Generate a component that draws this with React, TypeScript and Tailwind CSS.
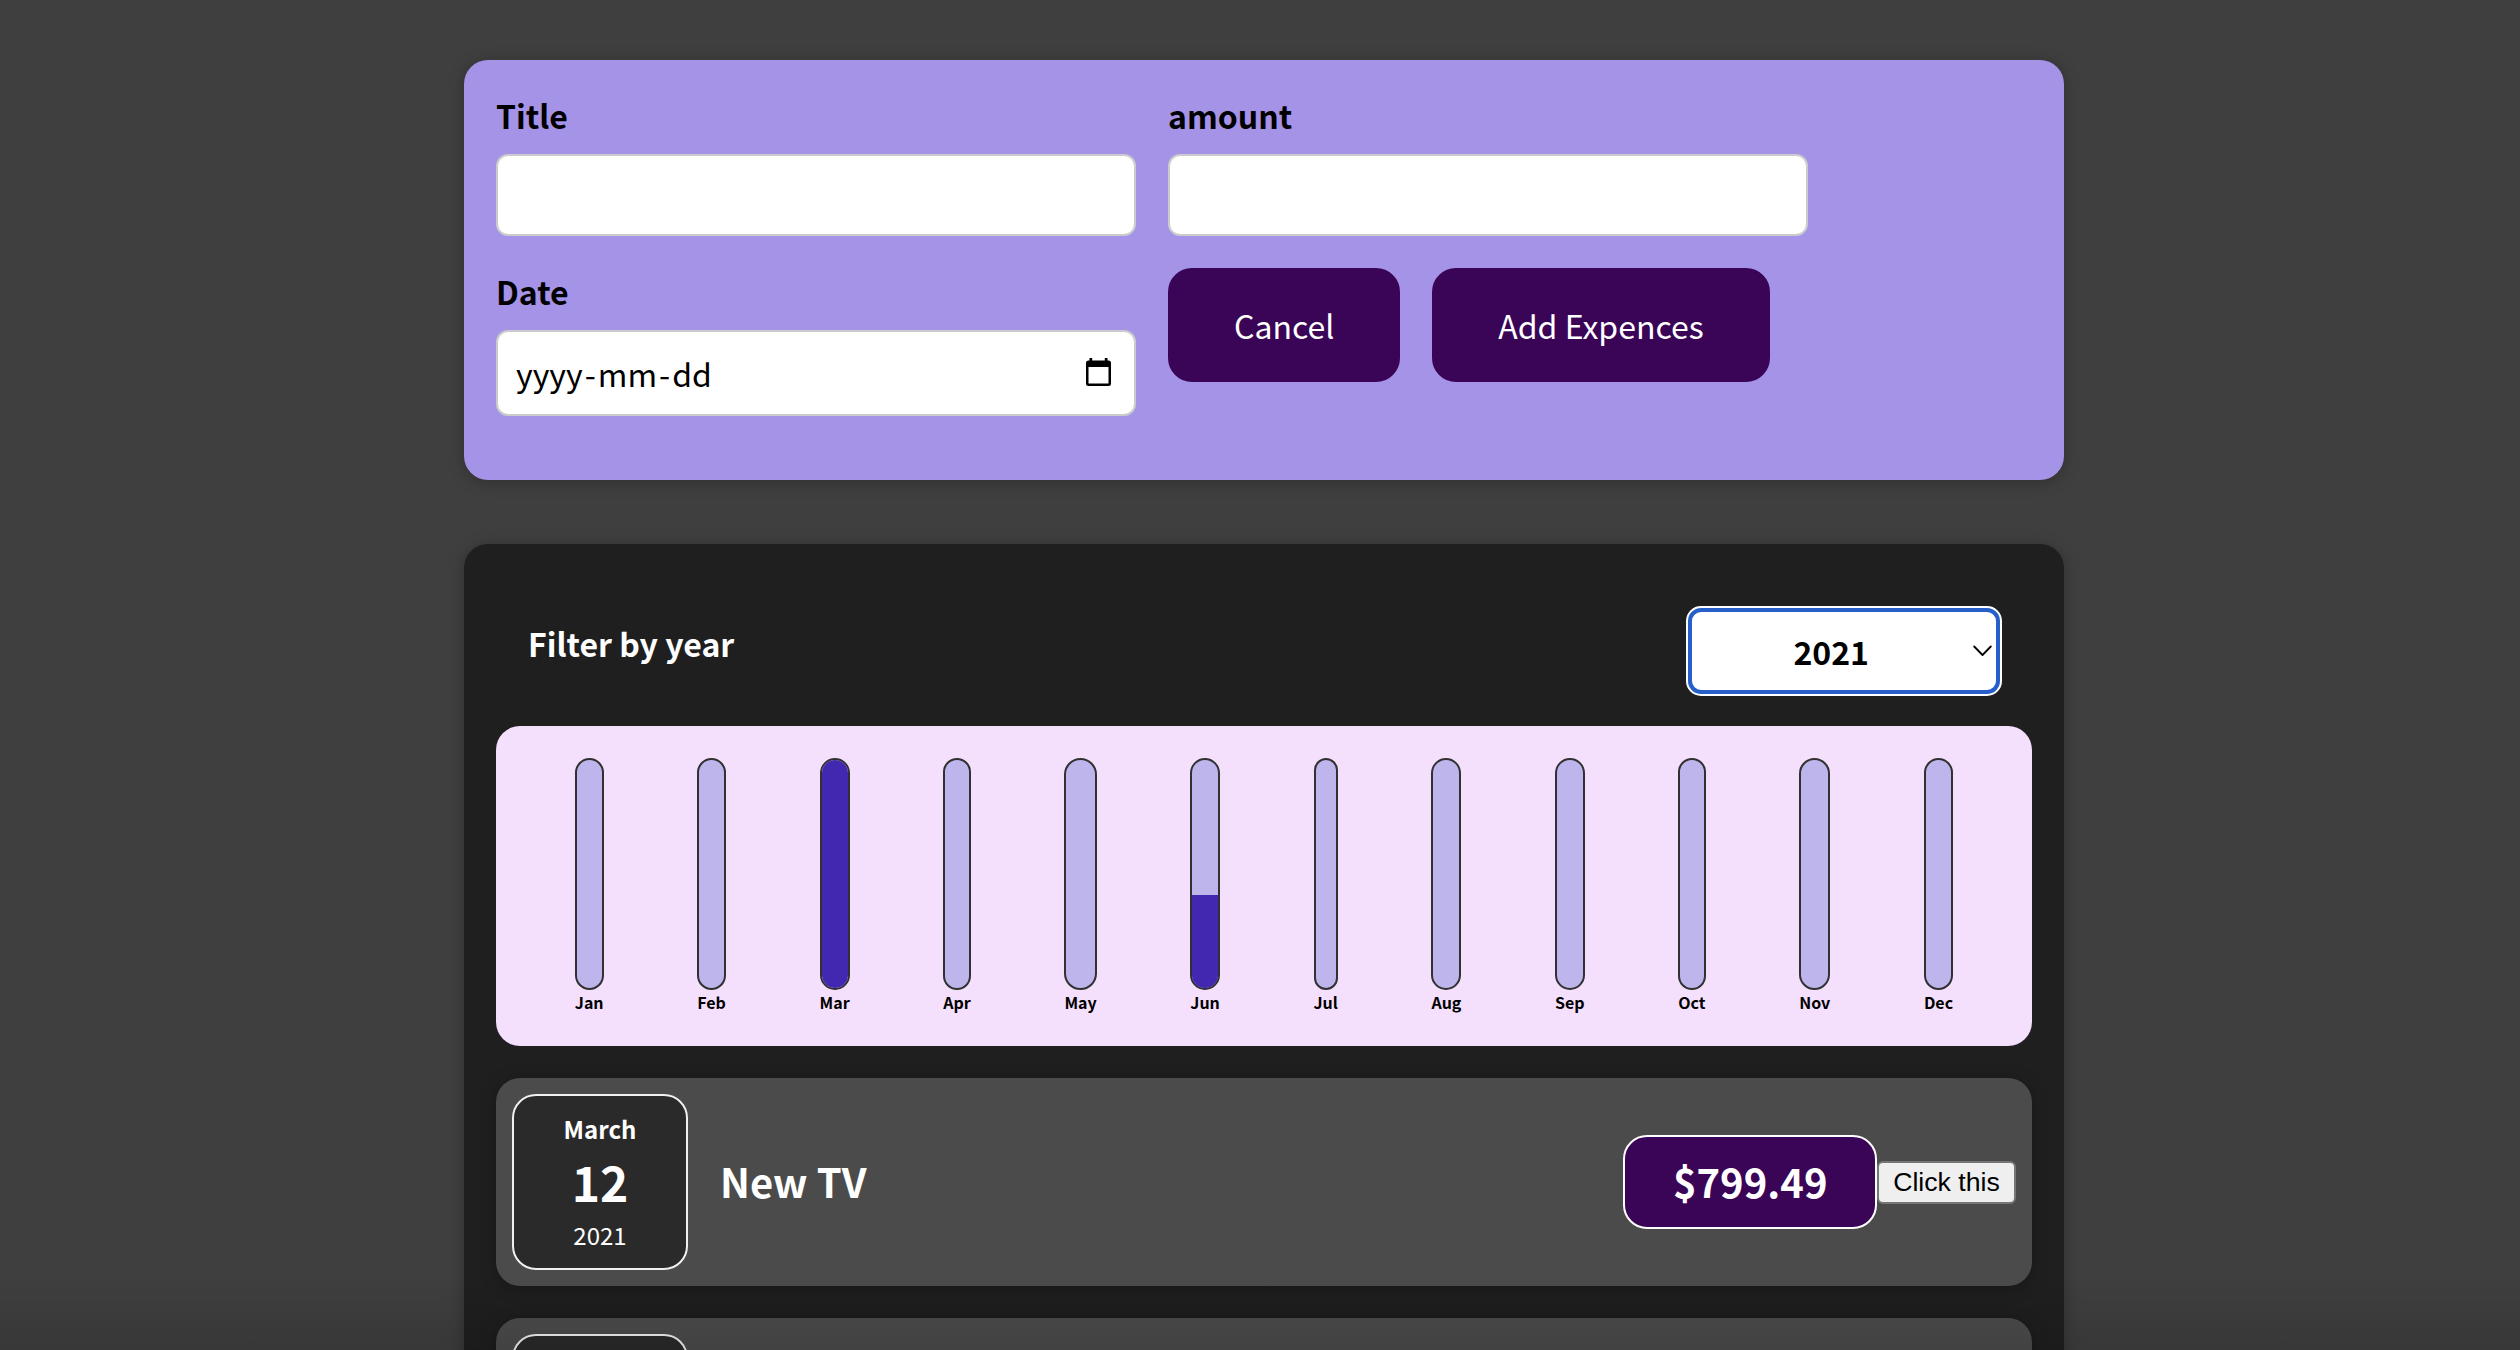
import type { ReactNode } from "react";

const months = [
  { label: "Jan", fill: 0 },
  { label: "Feb", fill: 0 },
  { label: "Mar", fill: 100 },
  { label: "Apr", fill: 0 },
  { label: "May", fill: 0 },
  { label: "Jun", fill: 41 },
  { label: "Jul", fill: 0 },
  { label: "Aug", fill: 0 },
  { label: "Sep", fill: 0 },
  { label: "Oct", fill: 0 },
  { label: "Nov", fill: 0 },
  { label: "Dec", fill: 0 },
];

type Expense = { month: string; day: string; year: string; title: string; amount: string };

const expenses: Expense[] = [
  { month: "March", day: "12", year: "2021", title: "New TV", amount: "$799.49" },
];

function Field({ label, tall, children }: { label: string; tall?: boolean; children?: ReactNode }) {
  return (
    <div className="w-[640px]">
      <div className="mb-4 h-[46px] text-[32px] leading-[46px] font-bold">{label}</div>
      <div
        className={
          "flex items-center justify-between rounded-xl border-2 border-[#cccccc] bg-white px-4 " +
          (tall ? "h-[86px]" : "h-[82px]")
        }
      >
        {children}
      </div>
    </div>
  );
}

function ActionButton({ children }: { children: ReactNode }) {
  return (
    <button className="h-[114px] rounded-3xl border-2 border-[#3a0557] bg-[#3a0557] px-16 text-[32px] leading-[46px] text-white">
      {children}
    </button>
  );
}

function ExpenseForm() {
  return (
    <section className="h-[420px] rounded-3xl bg-[#a593e8] p-8 shadow-[0_2px_16px_rgba(0,0,0,0.25)]">
      <div className="flex flex-wrap gap-8">
        <Field label="Title" />
        <Field label="amount" />
        <Field label="Date" tall>
          <div className="mb-px flex text-[32px] leading-[46px]">
            <span className="px-0.5">yyyy</span>
            <span>-</span>
            <span className="px-0.5">mm</span>
            <span>-</span>
            <span className="px-0.5">dd</span>
          </div>
          <svg className="mr-[7px] mb-0.5 h-7 w-[25px]" viewBox="0 0 25 28">
            <path
              fillRule="evenodd"
              d="M3.500 0h2.700v2.500h12.600V0h2.700v2.500h1A2.500 2.500 0 0 1 25 5v20.500a2.500 2.500 0 0 1-2.500 2.500h-20A2.500 2.500 0 0 1 0 25.500V5A2.500 2.500 0 0 1 2.500 2.500h1ZM2.500 9v16.500h20V9Z"
            />
          </svg>
        </Field>
        <div className="flex items-start gap-8">
          <ActionButton>Cancel</ActionButton>
          <ActionButton>Add Expences</ActionButton>
        </div>
      </div>
    </section>
  );
}

function YearFilter() {
  return (
    <div className="flex h-[150px] items-start justify-between pr-[30px] pl-8">
      <div className="mt-[44px] text-[32px] leading-[46px] font-bold text-white">Filter by year</div>
      <div className="mt-[30px] h-[90px] w-[316px] rounded-[15px] bg-white p-0.5">
        <div className="flex h-full items-center justify-end rounded-[13px] border-4 border-[#265fc9] pr-1">
          <span className="mr-[104px] text-[32px] leading-[46px] font-bold">2021</span>
          <svg className="h-3 w-[19px]" viewBox="0 0 19 12" fill="none" stroke="#000" strokeWidth="1.8">
            <path d="M1.200 1.500 9.500 10l8.300-8.500" strokeLinecap="round" strokeLinejoin="round" />
          </svg>
        </div>
      </div>
    </div>
  );
}

function Chart() {
  return (
    <div className="flex h-[320px] justify-around rounded-3xl bg-[#f4dffc] p-8">
      {months.map((m) => (
        <div key={m.label} className="flex h-64 flex-col">
          <div className="flex h-[232px] flex-col justify-end overflow-hidden rounded-3xl border-2 border-[#313131] bg-[#bfb5ed]">
            <div className="bg-[#4228b0]" style={{ height: `${m.fill}%` }} />
          </div>
          <div className="h-6 text-[16px] leading-[25px] font-bold">{m.label}</div>
        </div>
      ))}
    </div>
  );
}

function ItemCard({ children }: { children: ReactNode }) {
  return (
    <div className="mt-8 flex h-[208px] items-center rounded-3xl bg-[#4b4b4b] p-4 text-white shadow-[0_2px_16px_rgba(0,0,0,0.25)]">
      {children}
    </div>
  );
}

function DateBox({ children }: { children?: ReactNode }) {
  return (
    <div className="flex size-44 flex-col items-center justify-center rounded-3xl border-2 border-[#f0f0f0] bg-[#2a2a2a]">
      {children}
    </div>
  );
}

function ExpenseItem({ item }: { item: Expense }) {
  return (
    <ItemCard>
      <DateBox>
        <div className="text-[24px] leading-[34px] font-bold">{item.month}</div>
        <div className="text-[48px] leading-[71px] font-bold">{item.day}</div>
        <div className="text-[24px] leading-[35px]">{item.year}</div>
      </DateBox>
      <div className="mb-0.5 ml-8 flex-1 text-[40px] leading-[58px] font-bold">{item.title}</div>
      <div className="h-[94px] rounded-3xl border-2 border-white bg-[#3a0557] px-[47.5px] pt-[15px] text-[40px] leading-[58px] font-bold">
        {item.amount}
      </div>
      <button className="h-[43px] w-[139px] rounded-md border-2 border-[#767676] bg-[#efefef] font-['Liberation_Sans',Arial,sans-serif] text-[26.67px] leading-[30px] text-black">
        Click this
      </button>
    </ItemCard>
  );
}

export default function App() {
  return (
    <div className="relative h-[1350px] overflow-hidden bg-[#3f3f3f] pt-[60px] pl-[464px] font-['Noto_Sans_CJK_JP',sans-serif] text-black">
      <main className="flex w-[1600px] flex-col gap-16">
        <ExpenseForm />
        <section className="rounded-3xl bg-[#1f1f1f] p-8 pb-16 shadow-[0_2px_16px_rgba(0,0,0,0.25)]">
          <YearFilter />
          <Chart />
          {expenses.map((e) => (
            <ExpenseItem key={e.title} item={e} />
          ))}
          <ItemCard>
            <DateBox />
          </ItemCard>
        </section>
      </main>
      <div className="pointer-events-none absolute inset-x-0 bottom-0 h-[75px] bg-linear-to-b from-transparent to-black/12" />
    </div>
  );
}
